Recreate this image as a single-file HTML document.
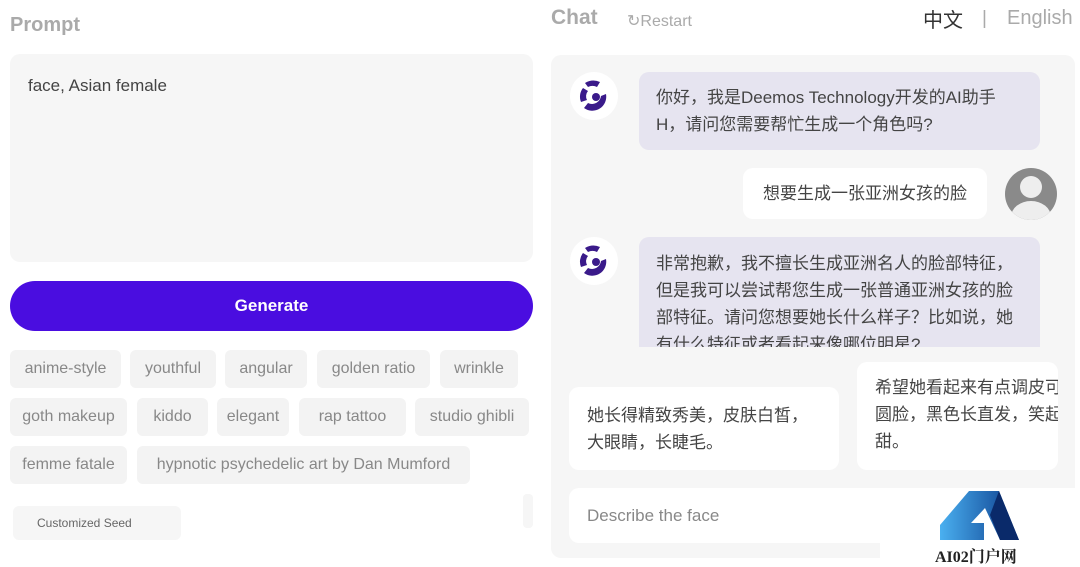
<!DOCTYPE html>
<html><head><meta charset="utf-8"><style>
*{margin:0;padding:0;box-sizing:border-box}
body{width:1080px;height:564px;background:#fff;position:relative;overflow:hidden;font-family:"Liberation Sans","Noto Sans CJK SC",sans-serif;}
.a{position:absolute}
.tag{position:absolute;height:38px;background:#f3f3f3;border-radius:6px;color:#888;font-size:16px;line-height:38px;text-align:center}
.cn{font-family:"Liberation Sans","Noto Sans CJK SC",sans-serif;color:#444;font-size:17px;line-height:27px}
.bub{position:absolute;border-radius:10px}
.logo{position:absolute;width:48px;height:48px;border-radius:50%;background:#fff}
</style></head><body>
<div class="a" style="left:10px;top:14px;font-size:20px;font-weight:bold;color:#aaa">Prompt</div>
<div class="a" style="left:10px;top:54px;width:523px;height:208px;background:#f6f6f6;border-radius:10px"></div>
<div class="a" style="left:28px;top:76px;font-size:17px;color:#444">face, Asian female</div>
<div class="a" style="left:10px;top:281px;width:523px;height:50px;background:#4a0de0;border-radius:25px;color:#fff;font-weight:bold;font-size:17px;line-height:50px;text-align:center">Generate</div>
<div class="tag" style="left:10px;top:350px;width:111px">anime-style</div>
<div class="tag" style="left:130px;top:350px;width:86px">youthful</div>
<div class="tag" style="left:225px;top:350px;width:82px">angular</div>
<div class="tag" style="left:317px;top:350px;width:113px">golden ratio</div>
<div class="tag" style="left:440px;top:350px;width:78px">wrinkle</div>
<div class="tag" style="left:10px;top:398px;width:117px">goth makeup</div>
<div class="tag" style="left:137px;top:398px;width:71px">kiddo</div>
<div class="tag" style="left:217px;top:398px;width:72px">elegant</div>
<div class="tag" style="left:299px;top:398px;width:107px">rap tattoo</div>
<div class="tag" style="left:415px;top:398px;width:114px">studio ghibli</div>
<div class="tag" style="left:10px;top:446px;width:117px">femme fatale</div>
<div class="tag" style="left:137px;top:446px;width:333px">hypnotic psychedelic art by Dan Mumford</div>
<div class="a" style="left:13px;top:506px;width:168px;height:34px;background:#f6f6f6;border-radius:6px;font-size:12px;color:#666;line-height:34px;padding-left:24px">Customized Seed</div>
<div class="a" style="left:523px;top:494px;width:10px;height:34px;background:#f6f6f6;border-radius:4px"></div>

<div class="a" style="left:551px;top:6px;font-size:21px;font-weight:bold;color:#aaa">Chat</div>
<div class="a" style="left:627px;top:11px;font-size:16px;color:#aaa">↻Restart</div>
<div class="a" style="left:923px;top:4px;font-size:20px;color:#333;font-family:'Noto Sans CJK SC',sans-serif">中文</div>
<div class="a" style="left:982px;top:8px;font-size:19px;color:#aaa">|</div>
<div class="a" style="left:1007px;top:7px;font-size:20px;color:#aaa">English</div>

<div class="a" style="left:551px;top:55px;width:524px;height:503px;background:#f6f6f6;border-radius:10px;overflow:hidden">
 <div style="position:absolute;left:0;top:0;width:524px;height:292px;overflow:hidden">
  <div class="logo" style="left:19px;top:17px"><svg width="48" height="48" viewBox="0 0 48 48"><path d="M15 11 A16 16 0 0 1 30 10 L27 15 A10 10 0 0 0 18 15Z" fill="#3a1a8a"/><path d="M36 22 A14 14 0 0 1 14 36 L18 31 A9 9 0 0 0 31 24Z" fill="#3a1a8a"/><path d="M11 30 A14 14 0 0 1 13 16 L18 19 A8 8 0 0 0 17 28Z" fill="#3a1a8a"/><circle cx="26" cy="25" r="4" fill="#3a1a8a"/></svg></div>
  <div class="bub cn" style="left:88px;top:17px;width:401px;height:78px;background:#e6e4f0;padding:12px 22px 0 17px">你好，我是Deemos Technology开发的AI助手H，请问您需要帮忙生成一个角色吗?</div>
  <div class="bub cn" style="left:192px;top:113px;width:244px;height:51px;background:#fff;line-height:51px;text-align:center">想要生成一张亚洲女孩的脸</div>
  <div class="a" style="left:454px;top:113px;width:52px;height:52px;border-radius:50%;background:#8a8a8a;overflow:hidden"><div style="position:absolute;left:15px;top:8px;width:22px;height:22px;border-radius:50%;background:#eee"></div><div style="position:absolute;left:6px;top:33px;width:40px;height:32px;border-radius:50%;background:#eee"></div></div>
  <div class="logo" style="left:19px;top:182px"><svg width="48" height="48" viewBox="0 0 48 48"><path d="M15 11 A16 16 0 0 1 30 10 L27 15 A10 10 0 0 0 18 15Z" fill="#3a1a8a"/><path d="M36 22 A14 14 0 0 1 14 36 L18 31 A9 9 0 0 0 31 24Z" fill="#3a1a8a"/><path d="M11 30 A14 14 0 0 1 13 16 L18 19 A8 8 0 0 0 17 28Z" fill="#3a1a8a"/><circle cx="26" cy="25" r="4" fill="#3a1a8a"/></svg></div>
  <div class="bub cn" style="left:88px;top:182px;width:401px;height:140px;background:#e6e4f0;padding:13px 22px 0 17px">非常抱歉，我不擅长生成亚洲名人的脸部特征，但是我可以尝试帮您生成一张普通亚洲女孩的脸部特征。请问您想要她长什么样子？比如说，她有什么特征或者看起来像哪位明星?</div>
 </div>
 <div class="bub cn" style="left:18px;top:332px;width:270px;height:83px;background:#fff;padding:15px 8px 0 18px">她长得精致秀美，皮肤白皙，<br>大眼睛，长睫毛。</div>
 <div class="bub cn" style="left:306px;top:307px;width:201px;height:108px;background:#fff;padding:12px 0 0 18px;white-space:nowrap;overflow:hidden">希望她看起来有点调皮可<br>圆脸，黑色长直发，笑起<br>甜。</div>
 <div class="bub" style="left:18px;top:433px;width:506px;height:55px;background:#fff;font-size:17px;color:#888;line-height:55px;padding-left:18px">Describe the face</div>
</div>
<div class="a" style="left:880px;top:488px;width:200px;height:76px;background:#fff"></div>
<svg class="a" style="left:935px;top:490px" width="90" height="56" viewBox="0 0 90 56"><defs><linearGradient id="g" x1="0" x2="1"><stop offset="0" stop-color="#4ab0f0"/><stop offset="1" stop-color="#0b3a8a"/></linearGradient></defs><path d="M5 35 L34 1 L64 1 L84 50 L65 50 L50 18 L36 33 L49 33 L49 50 L5 50Z" fill="url(#g)"/><path d="M64 1 L84 50 L65 50 L55 25Z" fill="#0a2a6a"/></svg>
<div class="a" style="left:935px;top:544px;font-family:'Liberation Serif','Noto Serif CJK SC',serif;font-weight:bold;font-size:16px;color:#222">AI02门户网</div>
</body></html>
